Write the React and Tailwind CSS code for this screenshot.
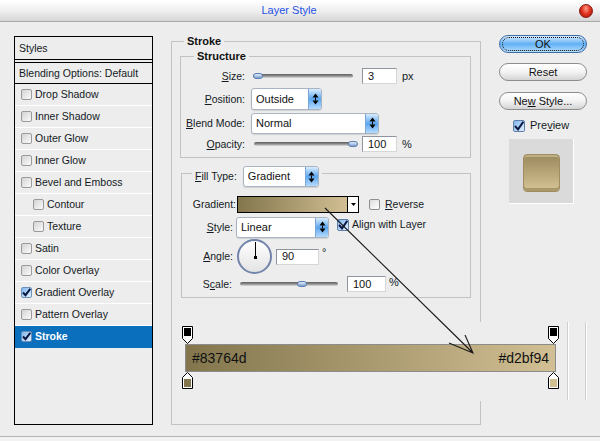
import React from "react";

const ListBox = ({ checked, dark }) => (
  <span
    className={
      "w-[11px] h-[11px] shrink-0 rounded-[2px] border flex items-center justify-center " +
      (checked
        ? "border-[#6d8fb8] bg-linear-to-br from-[#7fb6ec] to-[#e3f1ff]"
        : "border-[#9a9a9a] bg-linear-to-br from-[#d4d4d4] to-[#fafafa]")
    }
  >
    {checked && (
      <svg width="9" height="9" viewBox="0 0 9 9">
        <path d="M1 4.5 L3.5 7.2 L8.3 0.8" fill="none" stroke={dark ? "#0a1744" : "#0a1744"} strokeWidth="2" />
      </svg>
    )}
  </span>
);

const Row = ({ label, checked, nested, selected }) => (
  <div
    className={
      "h-[22px] shrink-0 flex items-center gap-[3px] border-b " +
      (nested ? "pl-[18px] " : "pl-[6px] ") +
      (selected ? "bg-[#0a6fbd] border-[#0a6fbd] text-white font-bold" : "border-white text-[#141a24]")
    }
  >
    <ListBox checked={checked} />
    <span>{label}</span>
  </div>
);

const Spin = () => (
  <svg width="7" height="12" viewBox="0 0 7 12">
    <path d="M3.5 0.5 L6.5 4.5 L0.5 4.5 Z" fill="#000" />
    <rect x="3" y="4.5" width="1" height="3" fill="#000" />
    <path d="M0.5 7.5 L6.5 7.5 L3.5 11.5 Z" fill="#000" />
  </svg>
);

const Select = ({ value, w, h }) => (
  <div
    className={
      "flex items-stretch bg-white border border-[#a9b4c2] rounded-[3px] overflow-hidden shadow-[0_1px_1px_rgba(0,0,0,0.12)] " +
      w +
      " " +
      h
    }
  >
    <div className="flex-1 flex items-center pl-[4px] text-[11px] text-[#111]">{value}</div>
    <div className="w-[13px] flex items-center justify-center bg-linear-to-b from-[#d9ecfd] via-[#5aa7ef] to-[#b5dbfd] border-l border-[#7aa7d6]">
      <Spin />
    </div>
  </div>
);

const Input = ({ value, w }) => (
  <div
    className={
      "h-[16px] bg-white border border-[#8e959e] border-r-[#d6d6d6] border-b-[#d6d6d6] flex items-center pl-[5px] text-[11px] text-[#111] " +
      w
    }
  >
    {value}
  </div>
);

const Slider = ({ w, pos }) => (
  <div className={"relative h-[14px] flex items-center " + w}>
    <div className="w-full h-[4px] rounded-full bg-linear-to-b from-[#5f5f5f] via-[#8d8d8d] to-[#e0e0e0]" />
    <div
      className="absolute top-[4px] w-[10px] h-[6px] rounded-full border border-[#5b7cae] bg-linear-to-b from-[#e4eefa] to-[#7f9fcf]"
      style={{ left: pos }}
    />
  </div>
);

const Btn = ({ children, primary }) => (
  <div
    className={
      "relative h-[18px] rounded-full flex items-center justify-center text-[11px] text-[#111] border " +
      (primary
        ? "border-[#3e6da6] bg-linear-to-b from-[#d7ecff] via-[#5fb0f4] to-[#b8defe]"
        : "border-[#8e8e8e] bg-linear-to-b from-white via-[#f3f3f3] to-[#d4d4d4]")
    }
  >
    {primary && (
      <span className="absolute inset-x-[2px] inset-y-[1px] rounded-full border border-dotted border-[#111]" />
    )}
    <span className="relative">{children}</span>
  </div>
);

const TopStop = () => (
  <svg width="11" height="18" viewBox="0 0 11 18">
    <path d="M0.5 0.5H10.5V12.5L5.5 17.5L0.5 12.5Z" fill="#fff" stroke="#000" />
    <rect x="2" y="2" width="7" height="8" fill="#000" />
  </svg>
);

const BottomStop = ({ color }) => (
  <svg width="11" height="17" viewBox="0 0 11 17">
    <path d="M0.5 16.5H10.5V5.5L5.5 0.5L0.5 5.5Z" fill="#fff" stroke="#000" />
    <rect x="2" y="7" width="7" height="8" fill={color} />
  </svg>
);

const U = ({ children }) => <span className="underline">{children}</span>;

export default function App() {
  return (
    <div className="relative w-[600px] h-[441px] overflow-hidden bg-[#ededed] font-['Liberation_Sans',Arial,sans-serif] text-[10.5px] leading-[13px] text-[#141a24] flex flex-col">
      {/* title bar */}
      <div className="h-[22px] shrink-0 flex items-center bg-linear-to-b from-[#ffffff] via-[#f0f0f0] to-[#d6d6d6] border-b border-[#a9a9a9]">
        <div className="w-[578px] text-center text-[11px] text-[#1f52e6]">Layer Style</div>
        <div className="ml-[1px] w-[14px] h-[14px] rounded-full border border-[#8a1b12] bg-radial-[at_50%_30%] from-[#ff9a8a] via-[#e0301c] to-[#8e140a]" />
      </div>

      {/* body */}
      <div className="h-[414px] shrink-0 flex pl-[14px]">
        {/* left list */}
        <div className="mt-[14px] w-[139px] h-[389px] border border-black flex flex-col">
          <div className="h-[23px] shrink-0 flex items-center pl-[4px] border-b border-black">Styles</div>
          <div className="h-[2px] shrink-0" />
          <div className="h-[22px] shrink-0 flex items-center pl-[4px] border-y border-black">
            Blending Options: Default
          </div>
          <Row label="Drop Shadow" />
          <Row label="Inner Shadow" />
          <Row label="Outer Glow" />
          <Row label="Inner Glow" />
          <Row label="Bevel and Emboss" />
          <Row label="Contour" nested />
          <Row label="Texture" nested />
          <Row label="Satin" />
          <Row label="Color Overlay" />
          <Row label="Gradient Overlay" checked />
          <Row label="Pattern Overlay" />
          <Row label="Stroke" checked selected />
        </div>

        {/* Stroke group */}
        <fieldset className="ml-[18px] mt-[13px] w-[310px] h-[390px] min-w-0 border border-[#c2c2c2] px-[8px]">
          <legend className="ml-[4px] px-[3px] font-bold text-[11px] leading-[13px] text-[#111]">Stroke</legend>

          {/* Structure */}
          <fieldset className="mt-[2px] w-[291px] min-w-0 border border-[#c2c2c2] pt-[4px] pb-[4px]">
            <legend className="ml-[13px] px-[3px] font-bold text-[11px] leading-[13px] text-[#111]">Structure</legend>
            <div className="flex items-center h-[18px]">
              <div className="w-[64px] text-right">
                <U>S</U>ize:
              </div>
              <Slider w="ml-[8px] w-[100px]" pos="0px" />
              <div className="ml-[9px]">
                <Input value="3" w="w-[35px]" />
              </div>
              <span className="ml-[5px] text-[11px]">px</span>
            </div>
            <div className="flex items-center h-[22px] mt-[3px]">
              <div className="w-[64px] text-right">
                <U>P</U>osition:
              </div>
              <div className="ml-[6px]">
                <Select value="Outside" w="w-[71px]" h="h-[22px]" />
              </div>
            </div>
            <div className="flex items-center h-[22px] mt-[2px]">
              <div className="w-[64px] text-right">
                <U>B</U>lend Mode:
              </div>
              <div className="ml-[6px]">
                <Select value="Normal" w="w-[128px]" h="h-[21px]" />
              </div>
            </div>
            <div className="flex items-center h-[18px] mt-[1px]">
              <div className="w-[64px] text-right">
                <U>O</U>pacity:
              </div>
              <Slider w="ml-[9px] w-[101px]" pos="94px" />
              <div className="ml-[7px]">
                <Input value="100" w="w-[35px]" />
              </div>
              <span className="ml-[5px] text-[11px]">%</span>
            </div>
          </fieldset>

          {/* Fill */}
          <fieldset className="mt-[2px] ml-[1px] w-[290px] min-w-0 border border-[#c2c2c2] pb-[5px]">
            <legend className="ml-[10px] pl-[3px] pr-[3px] pt-[6px]">
              <div className="flex items-center h-[21px]">
                <span>
                  <U>F</U>ill Type:
                </span>
                <div className="ml-[6px]">
                  <Select value="Gradient" w="w-[76px]" h="h-[21px]" />
                </div>
              </div>
            </legend>

            <div className="flex items-center h-[18px] mt-[8px]">
              <div className="w-[54px] text-right">Gradient:</div>
              <div className="ml-[1px] w-[122px] h-[17px] border border-black flex">
                <div className="flex-1 bg-linear-to-r from-[#83764d] to-[#d2bf94]" />
                <div className="w-[11px] bg-white border-l border-black flex items-center justify-center">
                  <svg width="5" height="3" viewBox="0 0 5 3">
                    <path d="M0 0H5L2.5 3Z" fill="#000" />
                  </svg>
                </div>
              </div>
              <span className="ml-[10px] w-[11px] h-[11px] rounded-[2px] border border-[#8e8e8e] bg-linear-to-br from-[#dedede] to-white" />
              <span className="ml-[5px]">
                <U>R</U>everse
              </span>
            </div>

            <div className="flex items-center h-[22px] mt-[3px]">
              <div className="w-[51px] text-right">
                <U>S</U>tyle:
              </div>
              <div className="ml-[3px]">
                <Select value="Linear" w="w-[93px]" h="h-[21px]" />
              </div>
              <div className="ml-[8px] mb-[5px] flex items-center">
                <span className="w-[12px] h-[12px] rounded-[2px] border border-[#5f7fa8] bg-linear-to-br from-[#7fb6ec] to-[#e3f1ff] flex items-center justify-center">
                  <svg width="10" height="10" viewBox="0 0 10 10">
                    <path d="M1 5 L4 8.3 L9.3 0.8" fill="none" stroke="#0a1744" strokeWidth="2" />
                  </svg>
                </span>
                <span className="ml-[3px]">Align with Layer</span>
              </div>
            </div>

            <div className="flex items-center h-[35px] mt-[1px]">
              <div className="w-[51px] text-right">
                <U>A</U>ngle:
              </div>
              <div className="ml-[4px] relative w-[35px] h-[35px] rounded-full border-2 border-[#7284ab] bg-linear-to-b from-white to-[#e4e4e4]">
                <div className="absolute left-[15.5px] top-[1px] w-[1px] h-[15px] bg-black" />
                <div className="absolute left-[14.5px] top-[14.5px] w-[3px] h-[3px] bg-black" />
              </div>
              <div className="ml-[4px]">
                <Input value="90" w="w-[43px]" />
              </div>
              <span className="ml-[3px] self-start mt-[7px] text-[11px]">°</span>
            </div>

            <div className="flex items-center h-[16px] mt-[2px]">
              <div className="w-[50px] text-right">
                S<U>c</U>ale:
              </div>
              <Slider w="ml-[8px] w-[98px]" pos="57px" />
              <div className="ml-[9px]">
                <Input value="100" w="w-[39px]" />
              </div>
              <span className="ml-[3px] self-start text-[11px]">%</span>
            </div>
          </fieldset>
        </fieldset>

        {/* right column */}
        <div className="ml-[18px] mt-[13px] w-[88px] flex flex-col">
          <Btn primary>OK</Btn>
          <div className="mt-[10px]">
            <Btn>Reset</Btn>
          </div>
          <div className="mt-[11px]">
            <Btn>
              Ne<U>w</U> Style...
            </Btn>
          </div>
          <div className="mt-[9px] pl-[14px] flex items-center h-[13px]">
            <span className="w-[12px] h-[12px] rounded-[2px] border border-[#5f7fa8] bg-linear-to-br from-[#7fb6ec] to-[#e3f1ff] flex items-center justify-center">
              <svg width="10" height="10" viewBox="0 0 10 10">
                <path d="M1 5 L4 8.3 L9.3 0.8" fill="none" stroke="#0a1744" strokeWidth="2" />
              </svg>
            </span>
            <span className="ml-[5px] text-[11px]">
              Pre<U>v</U>iew
            </span>
          </div>
          <div className="mt-[7px] ml-[10px] w-[65px] h-[65px] bg-[#dadada] border-r border-b border-white pl-[14px] pt-[15px]">
            <div className="w-[37px] h-[38px] rounded-[4px] border border-[#a08c5e] bg-linear-to-b from-[#9b8a5f] via-[#b9a678] to-[#d6c497] shadow-[inset_0_-3px_0_rgba(120,100,60,0.45),inset_0_2px_0_rgba(255,240,200,0.35)]" />
          </div>
        </div>
      </div>

      <div className="h-[1px] shrink-0 bg-[#b4b4b4]" />
      <div className="flex-1 bg-[#f2f2f2]" />

      {/* gradient editor overlay (pasted over the dialog) */}
      <div className="absolute left-[175px] top-[322px] w-[415px] h-[79px] bg-[#ededed]">
        <div className="absolute left-[7px] top-[4px] leading-none">
          <TopStop />
        </div>
        <div className="absolute left-[373px] top-[4px] leading-none">
          <TopStop />
        </div>
        <div className="absolute left-[10px] top-[22px] w-[371px] h-[28px] border border-[#8c8c8c] bg-linear-to-r from-[#83764d] to-[#d2bf94] flex items-center justify-between px-[6px] text-[14px] text-[#111]">
          <span>#83764d</span>
          <span>#d2bf94</span>
        </div>
        <div className="absolute left-[7px] top-[50px] leading-none">
          <BottomStop color="#83764d" />
        </div>
        <div className="absolute left-[373px] top-[50px] leading-none">
          <BottomStop color="#d2bf94" />
        </div>
        <div className="absolute left-[392px] top-0 h-[78px] w-[2px] border-l border-[#cfcfcf] bg-white" />
        <div className="absolute left-[410px] top-0 h-[78px] w-[2px] border-l border-[#cfcfcf] bg-white" />
      </div>

      {/* annotation arrow */}
      <svg className="absolute left-0 top-0 pointer-events-none" width="600" height="441" viewBox="0 0 600 441">
        <path d="M325 208 L473 353 M449 343 L473 353 L465 335" fill="none" stroke="#1a1a1a" strokeWidth="1.1" />
      </svg>
    </div>
  );
}
